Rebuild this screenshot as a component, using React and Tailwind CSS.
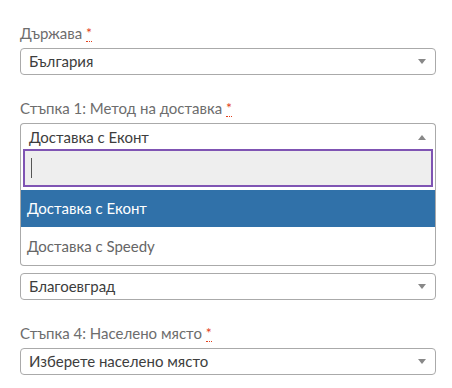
import React from "react";

function Caret({ up = false }) {
  return (
    <svg width="8" height="5" viewBox="0 0 8 5" className="shrink-0">
      {up ? <path d="M0 5 L4 0 L8 5 Z" fill="#888" /> : <path d="M0 0 L8 0 L4 5 Z" fill="#888" />}
    </svg>
  );
}

function Label({ text }) {
  return (
    <div className="h-[24px] leading-[24px] text-[15px] text-[#6d6d6d] mb-[3px]">
      {text}{" "}
      <abbr className="no-underline text-[#e2401c] text-[14px] border-b border-dotted border-[#e2401c] leading-none align-[1px]">*</abbr>
    </div>
  );
}

function Select({ value }) {
  return (
    <div className="h-[27px] w-[416px] border border-[#aaa] rounded-[4px] bg-white flex items-center justify-between pl-[8px] pr-[9px] text-[15px] text-[#3d3d3d]">
      <span>{value}</span>
      <Caret />
    </div>
  );
}

export default function App() {
  return (
    <div
      className="w-[452px] h-[388px] bg-white overflow-hidden pl-[20px] pt-[21px]"
      style={{ fontFamily: 'Lato, "Open Sans", sans-serif' }}
    >
      <Label text="Държава" />
      <Select value="България" />
      <div className="h-[21px]" />
      <Label text="Стъпка 1: Метод на доставка" />
      <div className="relative w-[416px]">
        <div className="h-[27px] border border-[#aaa] border-b-0 rounded-t-[4px] bg-white flex items-center justify-between pl-[8px] pr-[9px] text-[15px] text-[#3d3d3d]">
          <span>Доставка с Еконт</span>
          <Caret up />
        </div>
        <div className="absolute z-10 left-0 top-[26px] w-[416px] bg-white border border-[#aaa] border-t-0 rounded-b-[4px] overflow-hidden">
          <div className="px-[2px] pb-[3px]">
            <div className="h-[38px] border-2 border-[#7f54b3] bg-[#eeeeee] flex items-center pl-[6px]">
              <div className="w-[1px] h-[20px] bg-[#555]" />
            </div>
          </div>
          <div className="h-[37px] bg-[#3071a9] text-white text-[15px] flex items-center pl-[6px]">Доставка с Еконт</div>
          <div className="h-[38px] text-[#666] text-[15px] flex items-center pl-[6px]">Доставка с Speedy</div>
        </div>
      </div>
      <div className="h-[21px]" />
      <div className="h-[27px]" />
      <div className="h-[27px] w-[416px]" />
      <div className="h-[21px]" />
      <div className="h-[27px]" />
      <Select value="Благоевград" />
      <div className="h-[21px]" />
      <Label text="Стъпка 4: Населено място" />
      <Select value="Изберете населено място" />
    </div>
  );
}
